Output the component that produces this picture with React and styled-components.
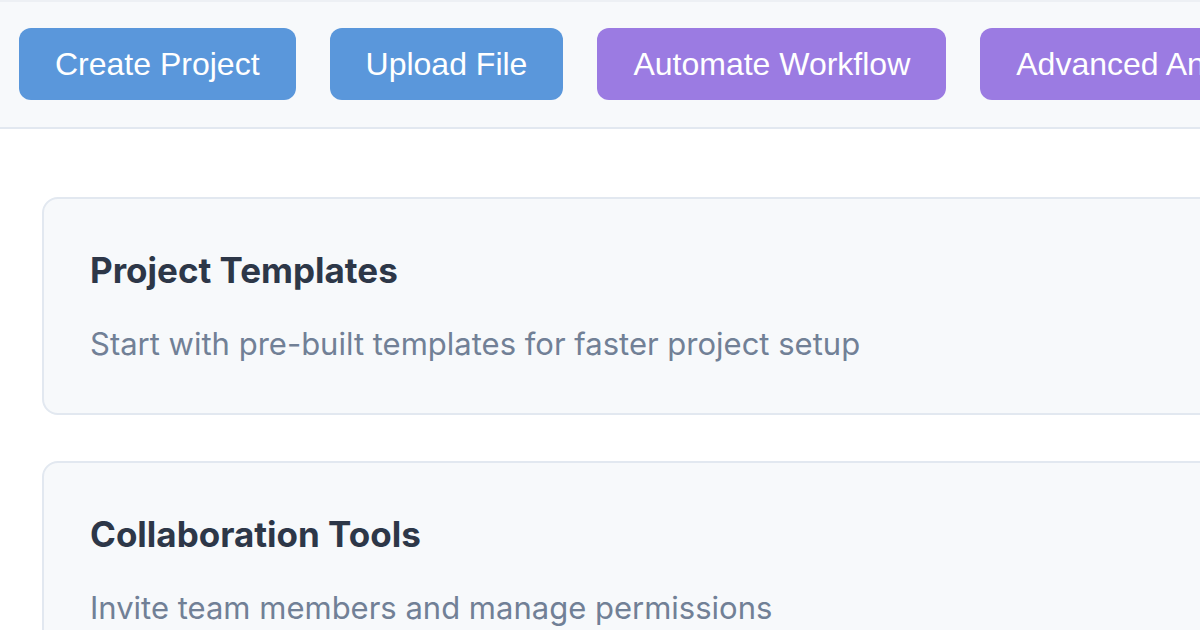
import styled, { createGlobalStyle } from "styled-components";

const GlobalStyle = createGlobalStyle`
  html, body {
    margin: 0;
    padding: 0;
    overflow: hidden;
    background: #ffffff;
  }
`;

const Page = styled.div`
  width: 1200px;
  height: 630px;
  overflow: hidden;
`;

const Toolbar = styled.div`
  display: flex;
  flex-wrap: nowrap;
  gap: 34px;
  padding: 26px 19px 27px;
  background: #f7f9fb;
  border-top: 2px solid #edf0f4;
  border-bottom: 2px solid #e2e8f0;
`;

const ActionButton = styled.button`
  flex: none;
  height: 72px;
  padding: 0 36px;
  border: none;
  border-radius: 12px;
  background: ${(p) => (p.$variant === "purple" ? "#9b7be2" : "#5a97db")};
  color: #ffffff;
  font-family: "Liberation Sans", Arial, sans-serif;
  font-size: 32px;
  white-space: nowrap;
  cursor: pointer;
`;

const Main = styled.div`
  display: flex;
  flex-direction: column;
  gap: 46px;
  padding: 68px 0 0 42px;
`;

const Card = styled.div`
  width: 1300px;
  box-sizing: border-box;
  padding: 50px 46px 46px;
  background: #f7f9fb;
  border: 2px solid #e2e8f0;
  border-radius: 16px;
`;

const CardTitle = styled.h2`
  margin: 0 0 30px;
  font-family: Inter, "Noto Sans", sans-serif;
  font-size: 35px;
  font-weight: 700;
  line-height: 42px;
  color: #2d3748;
`;

const CardText = styled.p`
  margin: 0;
  font-family: Inter, "Noto Sans", sans-serif;
  font-size: 31px;
  line-height: 46px;
  color: #718096;
`;

const actions = [
  { label: "Create Project", variant: "blue" },
  { label: "Upload File", variant: "blue" },
  { label: "Automate Workflow", variant: "purple" },
  { label: "Advanced Analytics", variant: "purple" },
];

const features = [
  {
    title: "Project Templates",
    text: "Start with pre-built templates for faster project setup",
  },
  {
    title: "Collaboration Tools",
    text: "Invite team members and manage permissions",
  },
];

export default function App() {
  return (
    <Page>
      <GlobalStyle />
      <Toolbar>
        {actions.map((a) => (
          <ActionButton key={a.label} $variant={a.variant}>
            {a.label}
          </ActionButton>
        ))}
      </Toolbar>
      <Main>
        {features.map((f) => (
          <Card key={f.title}>
            <CardTitle>{f.title}</CardTitle>
            <CardText>{f.text}</CardText>
          </Card>
        ))}
      </Main>
    </Page>
  );
}
